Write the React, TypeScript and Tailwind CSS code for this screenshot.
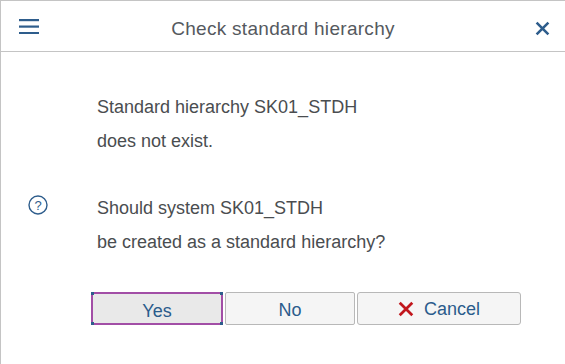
function Cross({ size, stroke, color }: { size: number; stroke: number; color: string }) {
  return (
    <svg width={size} height={size} viewBox="0 0 14 14">
      <path d="M1.5 1.5 L12.5 12.5 M12.5 1.5 L1.5 12.5" stroke={color} strokeWidth={stroke} strokeLinecap="butt" />
    </svg>
  );
}

export default function App() {
  return (
    <div
      className="w-[565px] h-[364px] bg-white border-l border-t border-[#c4c4c4] text-[#4a4d50] overflow-hidden flex flex-col"
      style={{ fontFamily: '"Liberation Sans", Arial, sans-serif' }}
    >
      {/* header */}
      <div className="h-[51px] shrink-0 border-b border-[#c4c4c4] flex items-center justify-between pl-[18px] pr-[15px]">
        <svg width="20" height="15" viewBox="0 0 20 15">
          <rect x="0" y="0" width="20" height="2.2" fill="#2e5d8c" />
          <rect x="0" y="6.5" width="20" height="2.2" fill="#2e5d8c" />
          <rect x="0" y="13" width="20" height="2.2" fill="#2e5d8c" />
        </svg>
        <div className="text-[19px] tracking-[0.3px] text-[#55595e] pr-[8px] pt-[6px]">Check standard hierarchy</div>
        <div className="mt-[4px]">
          <Cross size={15} stroke={2.4} color="#2e5d8c" />
        </div>
      </div>

      {/* body */}
      <div className="flex-1 pl-[96px] pt-[38px] text-[18px] leading-[34px]">
        <div>Standard hierarchy SK01_STDH</div>
        <div>does not exist.</div>

        <div className="relative mt-[33px]">
          <svg
            className="absolute left-[-69px] top-[4px]"
            width="20"
            height="20"
            viewBox="0 0 20 20"
          >
            <circle cx="10" cy="10" r="9" fill="none" stroke="#2e5d8c" strokeWidth="1.4" />
            <text
              x="10"
              y="14.5"
              textAnchor="middle"
              fontSize="13"
              fill="#2e5d8c"
              fontFamily="Liberation Sans, Arial, sans-serif"
            >
              ?
            </text>
          </svg>
          <div>Should system SK01_STDH</div>
          <div>be created as a standard hierarchy?</div>
        </div>

        {/* buttons */}
        <div className="flex gap-[2px] mt-[33px] ml-[-6px]">
          <button className="relative w-[132px] h-[33px] bg-[#e9e9e9] border-2 border-[#a24ea6] text-[#2b5c8c] text-[18px]">
            <span className="absolute -left-[2px] -top-[2px] w-[3px] h-[3px] bg-[#2e5d8c]" />
            <span className="absolute -right-[2px] -top-[2px] w-[3px] h-[3px] bg-[#2e5d8c]" />
            <span className="absolute -left-[2px] -bottom-[2px] w-[3px] h-[3px] bg-[#2e5d8c]" />
            <span className="absolute -right-[2px] -bottom-[2px] w-[3px] h-[3px] bg-[#2e5d8c]" />
            Yes
          </button>
          <button className="w-[130px] h-[33px] bg-[#f5f5f5] border border-[#b8b8b8] rounded-[2px] text-[#2b5c8c] text-[18px]">
            No
          </button>
          <button className="w-[164px] h-[33px] bg-[#f5f5f5] border border-[#b8b8b8] rounded-[3px] text-[#2b5c8c] text-[18px] flex items-center justify-center gap-[10px]">
            <Cross size={16} stroke={2.4} color="#c1161c" />
            Cancel
          </button>
        </div>
      </div>
    </div>
  );
}
